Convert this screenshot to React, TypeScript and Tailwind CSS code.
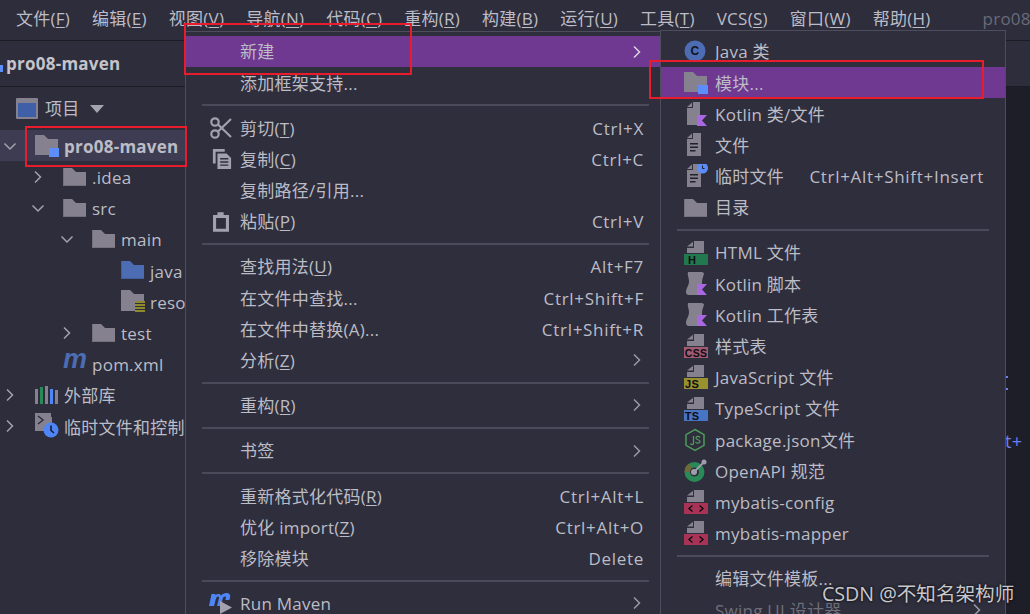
import React from "react";

const fontCls = "font-['Open_Sans','Noto_Sans_CJK_SC',sans-serif]";

function M({ t, k }: { t: string; k?: string }) {
  if (!k) return <>{t}</>;
  return (
    <>
      {t}(<span className="underline underline-offset-2">{k}</span>)
    </>
  );
}

const Folder = ({ c = "#85818f", w = 23, h = 18 }: { c?: string; w?: number; h?: number }) => (
  <svg width={w} height={h} viewBox="0 0 23 18" className="shrink-0">
    <path d="M0 0h9l4 4h10v14H0z" fill={c} />
    <path d="M0 0h1v18H0zM0 17h23v1H0z" fill="#000" opacity=".12" />
  </svg>
);

const ModuleFolder = () => (
  <svg width="25" height="24" viewBox="0 0 25 24" className="shrink-0">
    <path d="M0 1h9l4 4h10v10h-7v6H0z" fill="#85818f" />
    <rect x="14" y="14" width="10" height="9" fill="#5c8dfb" />
  </svg>
);

const Chevron = ({ open, c = "#a3a3ad" }: { open?: boolean; c?: string }) => (
  <svg width="14" height="14" viewBox="0 0 14 14" className="shrink-0">
    {open ? (
      <path d="M1.500 4.500 7 10l5.500-5.500" fill="none" stroke={c} strokeWidth="1.500" />
    ) : (
      <path d="M4 1.500 9.500 7 4 12.500" fill="none" stroke={c} strokeWidth="1.500" />
    )}
  </svg>
);

const Badge = ({ bg, label, fs = 11, x = 8 }: { bg: string; label: string; fs?: number; x?: number }) => (
  <svg width="24" height="24" viewBox="0 0 24 24" className="shrink-0">
    <path d="M10 0h10v12H3V7h7z" fill="#85818f" />
    <path d="M3 5.500 9 .8v4.700z" fill="#85818f" />
    <rect x="0" y="13" width="24" height="11" fill={bg} />
    <text x={x} y="23" textAnchor="middle" fontSize={fs} fontWeight="700" fill="#0d0d12" fontFamily="Liberation Sans">
      {label}
    </text>
  </svg>
);

const KotlinFile = () => (
  <svg width="24" height="24" viewBox="0 0 24 24" className="shrink-0">
    <path d="M9 0h7v13h-3v10H3V6h6z" fill="#85818f" />
    <path d="M3 5 8 .5V5z" fill="#85818f" />
    <path d="M13 13h10l-5 5.500 5 5.500H13z" fill="#a968e0" />
  </svg>
);

const KotlinScript = () => (
  <svg width="24" height="24" viewBox="0 0 24 24" className="shrink-0">
    <path d="M4 0h14c1 0 2 1 2 2 -1 3-2 5-2 10h-5v11H5c-2 0-3-1-3-3 0-4 3-6 3-11 0-3-2-6-1-9z" fill="#85818f" />
    <path d="M13 12h10l-5 5.500 5 5.500H13z" fill="#a968e0" />
  </svg>
);

const PlainFile = ({ clock }: { clock?: boolean }) => (
  <svg width="24" height="24" viewBox="0 0 24 24" className="shrink-0">
    <path d="M9 0h8v23H3V6h6z" fill="#85818f" />
    <path d="M3 5 8 .5V5z" fill="#85818f" />
    <path d="M6 10h8v1.500H6zM6 13.500h8v1.500H6zM6 17h5.500v1.500H6z" fill="#22222c" />
    {clock && (
      <g>
        <circle cx="18.500" cy="4" r="5.500" fill="#5c8dfb" />
        <path d="M18.500 1.500V4.500h2" fill="none" stroke="#1d1d28" strokeWidth="1" />
      </g>
    )}
  </svg>
);

const JavaClass = () => (
  <svg width="24" height="24" viewBox="0 0 24 24" className="shrink-0">
    <circle cx="11" cy="11" r="10.500" fill="#4c6cb3" />
    <text x="11" y="15" textAnchor="middle" fontSize="12" fontWeight="700" fill="#14141c" fontFamily="Liberation Sans">C</text>
  </svg>
);

const NodeIcon = () => (
  <svg width="24" height="24" viewBox="0 0 24 24" className="shrink-0">
    <path d="M11 1.500 20 6.700v10.600L11 22.500 2 17.300V6.700z" fill="none" stroke="#4f9a5b" strokeWidth="1.500" />
    <path d="M9.500 8v7.500c0 1.500-2.500 1.500-3 0M16 9.500c-1-1.500-4-1.500-4 .5s4 1.500 4 3.500-3.500 2-4.500.5" fill="none" stroke="#4f9a5b" strokeWidth="1.300" />
  </svg>
);

const OpenApi = () => (
  <svg width="24" height="24" viewBox="0 0 24 24" className="shrink-0">
    <circle cx="10.500" cy="13" r="10" fill="#2a8a57" />
    <path d="M10.500 13 .5 13A10 10 0 0 1 5 4.500z" fill="#6e6a3a" />
    <circle cx="10.500" cy="13" r="4.500" fill="#2e2e3c" />
    <path d="M10 13 20 3" stroke="#a09dab" strokeWidth="1.800" />
    <circle cx="20" cy="3" r="2.500" fill="#a09dab" />
    <circle cx="10" cy="13" r="3" fill="#a09dab" />
  </svg>
);

const Mybatis = () => (
  <svg width="24" height="24" viewBox="0 0 24 24" className="shrink-0">
    <path d="M10 0h10v12H3V7h7z" fill="#85818f" />
    <path d="M3 5.500 9 .8v4.700z" fill="#85818f" />
    <rect x="0" y="13" width="24" height="11" fill="#a83356" />
    <path d="M8.500 15.500 5 18.500l3.500 3M15.500 15.500 19 18.500l-3.500 3" fill="none" stroke="#0d0d12" strokeWidth="1.400" />
  </svg>
);

const Scissors = () => (
  <svg width="24" height="24" viewBox="0 0 24 24" fill="none" stroke="#a3a1ad" strokeWidth="2.200" className="shrink-0 ml-[1px]">
    <circle cx="6" cy="6" r="3.700" />
    <circle cx="6" cy="18" r="3.700" />
    <path d="M9 8.500 22 21M9 15.500 22 3" />
  </svg>
);

const CopyIcon = () => (
  <svg width="20" height="22" viewBox="0 0 22 24" className="shrink-0 ml-[4px]">
    <path d="M1 1h13v3H4v13H1z" fill="#a3a1ad" />
    <path d="M6 6h10l5 5v12H6z" fill="#a3a1ad" />
    <path d="M9 11h9v1.500H9zM9 14.500h9V16H9zM9 18h9v1.500H9z" fill="#2e2e3c" />
  </svg>
);

const PasteIcon = () => (
  <svg width="16" height="22" viewBox="0 0 18 22" className="shrink-0 ml-[5px]">
    <path d="M0 3h5V0h7v3h6v19H0zM3.500 6.500v12h11v-12z" fill="#a3a1ad" fillRule="evenodd" />
  </svg>
);

const RunMaven = () => (
  <svg width="26" height="22" viewBox="0 0 26 22" className="shrink-0">
    <path d="M1 14 3.500 2h4l-.3 1.500C9 1.500 12 1.500 13 3.500 15 1.500 20-.5 22 3c.6 1 0 3-.6 5h-4c.5-2 1-3.500-.5-3.500s-2 1.500-2.500 3.500L13 14H9l2-8c.3-1.500-1.500-2-2.500-.5C7.500 7 7 11 6 14z" fill="#4f86f7" />
    <path d="M12 9 24 15.500 12 22z" fill="#a3a1ad" />
  </svg>
);

const PomM = () => (
  <span className="w-[24px] shrink-0 text-[27px] tracking-normal leading-none font-bold italic text-[#4c6cb3] font-['Liberation_Sans',sans-serif] -mt-[8px]">m</span>
);

const ExtLib = () => (
  <svg width="24" height="18" viewBox="0 0 24 18" className="shrink-0">
    <rect x="0" y="3" width="3" height="15" fill="#85818f" />
    <rect x="5" y="1" width="3" height="17" fill="#2a8a57" />
    <rect x="10" y="0" width="3" height="18" fill="#85818f" />
    <rect x="15" y="3" width="3" height="15" fill="#4f86f7" />
    <rect x="20" y="4" width="3" height="14" fill="#85818f" />
  </svg>
);

const Scratch = () => (
  <svg width="26" height="26" viewBox="0 0 26 26" className="shrink-0">
    <path d="M0 0h16v4h1v8h-6v6H0z" fill="#85818f" />
    <path d="M3 3 8 7 3 11" fill="none" stroke="#2e2e3c" strokeWidth="1.500" />
    <circle cx="16" cy="17" r="7.500" fill="#4f86f7" />
    <path d="M16 12.500V17.500L19 20" fill="none" stroke="#16161f" strokeWidth="1.500" />
  </svg>
);

const ResFolder = () => (
  <svg width="25" height="23" viewBox="0 0 25 23" className="shrink-0">
    <path d="M0 0h9l4 4h10v10h-9v7H0z" fill="#85818f" />
    <rect x="14" y="11" width="10" height="12" fill="#2e2e3c" />
    <path d="M14 11h10v2H14zM14 14h10v2H14zM14 17h10v2H14zM14 20h10v2H14z" fill="#8f8a2c" />
  </svg>
);

const ProjectIcon = () => (
  <svg width="22" height="21" viewBox="0 0 22 21" className="shrink-0">
    <rect x="0" y="0" width="22" height="21" rx="1" fill="#85818f" />
    <rect x="2" y="5" width="18" height="14" fill="#3f5fa8" />
  </svg>
);

type TreeRow = {
  pad: number;
  open?: boolean;
  chev?: boolean;
  icon: React.ReactNode;
  label: string;
  gap?: number;
  sel?: boolean;
  bold?: boolean;
};

const tree: TreeRow[] = [
  { pad: 3, chev: true, open: true, icon: <ModuleFolder />, label: "pro08-maven", sel: true, bold: true, gap: 4 },
  { pad: 31, chev: true, icon: <Folder />, label: ".idea", gap: 6 },
  { pad: 31, chev: true, open: true, icon: <Folder />, label: "src", gap: 6 },
  { pad: 60, chev: true, open: true, icon: <Folder />, label: "main", gap: 6 },
  { pad: 121, icon: <Folder c="#4c6cb3" />, label: "java", gap: 6 },
  { pad: 121, icon: <ResFolder />, label: "resources", gap: 4 },
  { pad: 60, chev: true, icon: <Folder />, label: "test", gap: 6 },
  { pad: 63, icon: <PomM />, label: "pom.xml", gap: 5 },
  { pad: 3, chev: true, icon: <ExtLib />, label: "外部库", gap: 5 },
  { pad: 3, chev: true, icon: <Scratch />, label: "临时文件和控制台", gap: 3 },
];

type MenuRow =
  | { sep: true }
  | {
      sep?: false;
      t: string;
      k?: string;
      s?: string;
      arrow?: boolean;
      icon?: React.ReactNode;
      hi?: boolean;
      dim?: boolean;
    };

const menu1: MenuRow[] = [
  { t: "新建", hi: true, arrow: true },
  { t: "添加框架支持..." },
  { sep: true },
  { t: "剪切", k: "T", s: "Ctrl+X", icon: <Scissors /> },
  { t: "复制", k: "C", s: "Ctrl+C", icon: <CopyIcon /> },
  { t: "复制路径/引用..." },
  { t: "粘贴", k: "P", s: "Ctrl+V", icon: <PasteIcon /> },
  { sep: true },
  { t: "查找用法", k: "U", s: "Alt+F7" },
  { t: "在文件中查找...", s: "Ctrl+Shift+F" },
  { t: "在文件中替换(A)...", s: "Ctrl+Shift+R" },
  { t: "分析", k: "Z", arrow: true },
  { sep: true },
  { t: "重构", k: "R", arrow: true },
  { sep: true },
  { t: "书签", arrow: true },
  { sep: true },
  { t: "重新格式化代码", k: "R", s: "Ctrl+Alt+L" },
  { t: "优化 import", k: "Z", s: "Ctrl+Alt+O" },
  { t: "移除模块", s: "Delete" },
  { sep: true },
  { t: "Run Maven", arrow: true, icon: <RunMaven /> },
];

const menu2: MenuRow[] = [
  { t: "Java 类", icon: <JavaClass /> },
  { t: "模块...", hi: true, icon: <ModuleFolder /> },
  { t: "Kotlin 类/文件", icon: <KotlinFile /> },
  { t: "文件", icon: <PlainFile /> },
  { t: "临时文件", s: "Ctrl+Alt+Shift+Insert", icon: <PlainFile clock /> },
  { t: "目录", icon: <Folder /> },
  { sep: true },
  { t: "HTML 文件", icon: <Badge bg="#22794f" label="H" /> },
  { t: "Kotlin 脚本", icon: <KotlinScript /> },
  { t: "Kotlin 工作表", icon: <KotlinScript /> },
  { t: "样式表", icon: <Badge bg="#a05a72" label="CSS" fs={10.500} x={12} /> },
  { t: "JavaScript 文件", icon: <Badge bg="#99902f" label="JS" /> },
  { t: "TypeScript 文件", icon: <Badge bg="#4874c4" label="TS" /> },
  { t: "package.json文件", icon: <NodeIcon /> },
  { t: "OpenAPI 规范", icon: <OpenApi /> },
  { t: "mybatis-config", icon: <Mybatis /> },
  { t: "mybatis-mapper", icon: <Mybatis /> },
  { sep: true },
  { t: "编辑文件模板..." },
  { t: "Swing UI 设计器", dim: true, arrow: true },
];

function MenuList({ rows, iconPad }: { rows: MenuRow[]; iconPad: string }) {
  return (
    <>
      {rows.map((r, i) =>
        r.sep ? (
          <div key={i} className="h-[14px] shrink-0 flex items-center px-4">
            <div className="h-[2px] w-full bg-[#4a4a5a]" />
          </div>
        ) : (
          <div
            key={i}
            className={`relative h-[31.2px] shrink-0 flex items-center pl-[54px] pr-[21px] ${r.hi ? "bg-[#6f3891]" : ""} ${r.dim ? "text-[#6f6f7b]" : ""}`}
          >
            {r.icon && <span className={`absolute top-0 bottom-0 flex items-center ${iconPad}`}>{r.icon}</span>}
            <span className="flex-1 whitespace-nowrap pt-[1px]">
              <M t={r.t} k={r.k} />
            </span>
            {r.s && <span className="whitespace-nowrap tracking-[0.7px] pt-[1px]">{r.s}</span>}
            {r.arrow && <Chevron c={r.hi ? "#d8d4e0" : "#9a9aa5"} />}
          </div>
        ),
      )}
    </>
  );
}

const bar = [
  ["文件", "F"],
  ["编辑", "E"],
  ["视图", "V"],
  ["导航", "N"],
  ["代码", "C"],
  ["重构", "R"],
  ["构建", "B"],
  ["运行", "U"],
  ["工具", "T"],
  ["VCS", "S"],
  ["窗口", "W"],
  ["帮助", "H"],
];

export default function App() {
  return (
    <div className={`relative w-[1030px] h-[614px] overflow-hidden bg-[#2d2d3b] text-[#bcbcc6] text-[17px] tracking-[0.25px] ${fontCls}`}>
      <div className="h-[41px] flex items-center pl-[16px] gap-[22px] border-b border-[#1b1b24] pb-[2px] whitespace-nowrap">
        {bar.map(([a, b]) => (
          <span key={a}>
            <M t={a} k={b} />
          </span>
        ))}
        <span className="ml-[30px] text-[#6a6a78]">pro08-maven</span>
      </div>
      <div className="flex h-[573px]">
        <aside className="w-[186px] shrink-0 overflow-hidden">
          <div className="h-[46px] flex items-center border-b border-[#1b1b24] relative">
            <span className="w-[3px] h-[7px] bg-[#5c8dfb] mt-[10px]" />
            <span className="ml-[3px] font-bold text-[#c4c4cc]">pro08-maven</span>
          </div>
          <div className="h-[43px] flex items-center pl-[16px] gap-[7px]">
            <ProjectIcon />
            <span>项目</span>
            <svg width="14" height="8" viewBox="0 0 14 8" className="ml-[3px]">
              <path d="M0 0h14L7 8z" fill="#a3a3ad" />
            </svg>
          </div>
          {tree.map((r) => (
            <div
              key={r.label}
              className={`h-[31.2px] flex items-center whitespace-nowrap ${r.sel ? "bg-[#3e3c52]" : ""}`}
              style={{ paddingLeft: r.pad }}
            >
              {r.chev && <span className="mr-[18px] flex"><Chevron open={r.open} /></span>}
              {r.icon}
              <span className={`pt-[2px] ${r.bold ? "font-bold" : ""}`} style={{ marginLeft: r.gap }}>
                {r.label}
              </span>
            </div>
          ))}
        </aside>
        <main className="flex-1 flex flex-col">
          <div className="h-[46px] border-b border-[#1b1b24]" />
          <div className="flex-1 bg-[#1e1e29]" />
        </main>
      </div>

      {/* editor fragments peeking out on the right */}
      <span className="absolute left-[1005px] top-[428px] text-[#6a80f0] text-[18px]">t+</span>
      <span className="absolute left-[1006px] top-[376px] w-[2px] h-[2px] bg-[#6a80f0]" />
      <span className="absolute left-[1006px] top-[388px] w-[2px] h-[2px] bg-[#6a80f0]" />

      {/* first context menu */}
      <div className="absolute left-[185px] top-[31px] w-[481px] h-[590px] bg-[#2e2e3c] border border-[#4d4d5e] pt-[4px] flex flex-col">
        <MenuList rows={menu1} iconPad="left-[22px]" />
      </div>

      {/* submenu */}
      <div className="absolute left-[660px] top-[30px] w-[346px] h-[600px] bg-[#2e2e3c] border border-[#4d4d5e] pt-[5px] flex flex-col">
        <MenuList rows={menu2} iconPad="left-[23px]" />
      </div>

      {/* annotation boxes */}
      <div className="absolute left-[25px] top-[126px] w-[162px] h-[41px] border-[2px] border-[#e81c2c]" />
      <div className="absolute left-[184px] top-[23px] w-[228px] h-[52px] border-[2px] border-[#e81c2c]" />
      <div className="absolute left-[649px] top-[60px] w-[335px] h-[39px] border-[2px] border-[#e81c2c]" />

      {/* watermark */}
      <span className="absolute left-[822px] top-[579px] text-[19.6px] tracking-normal text-[#c8c8cc] whitespace-nowrap [text-shadow:0_0_3px_#000]">
        CSDN @不知名架构师
      </span>
    </div>
  );
}
